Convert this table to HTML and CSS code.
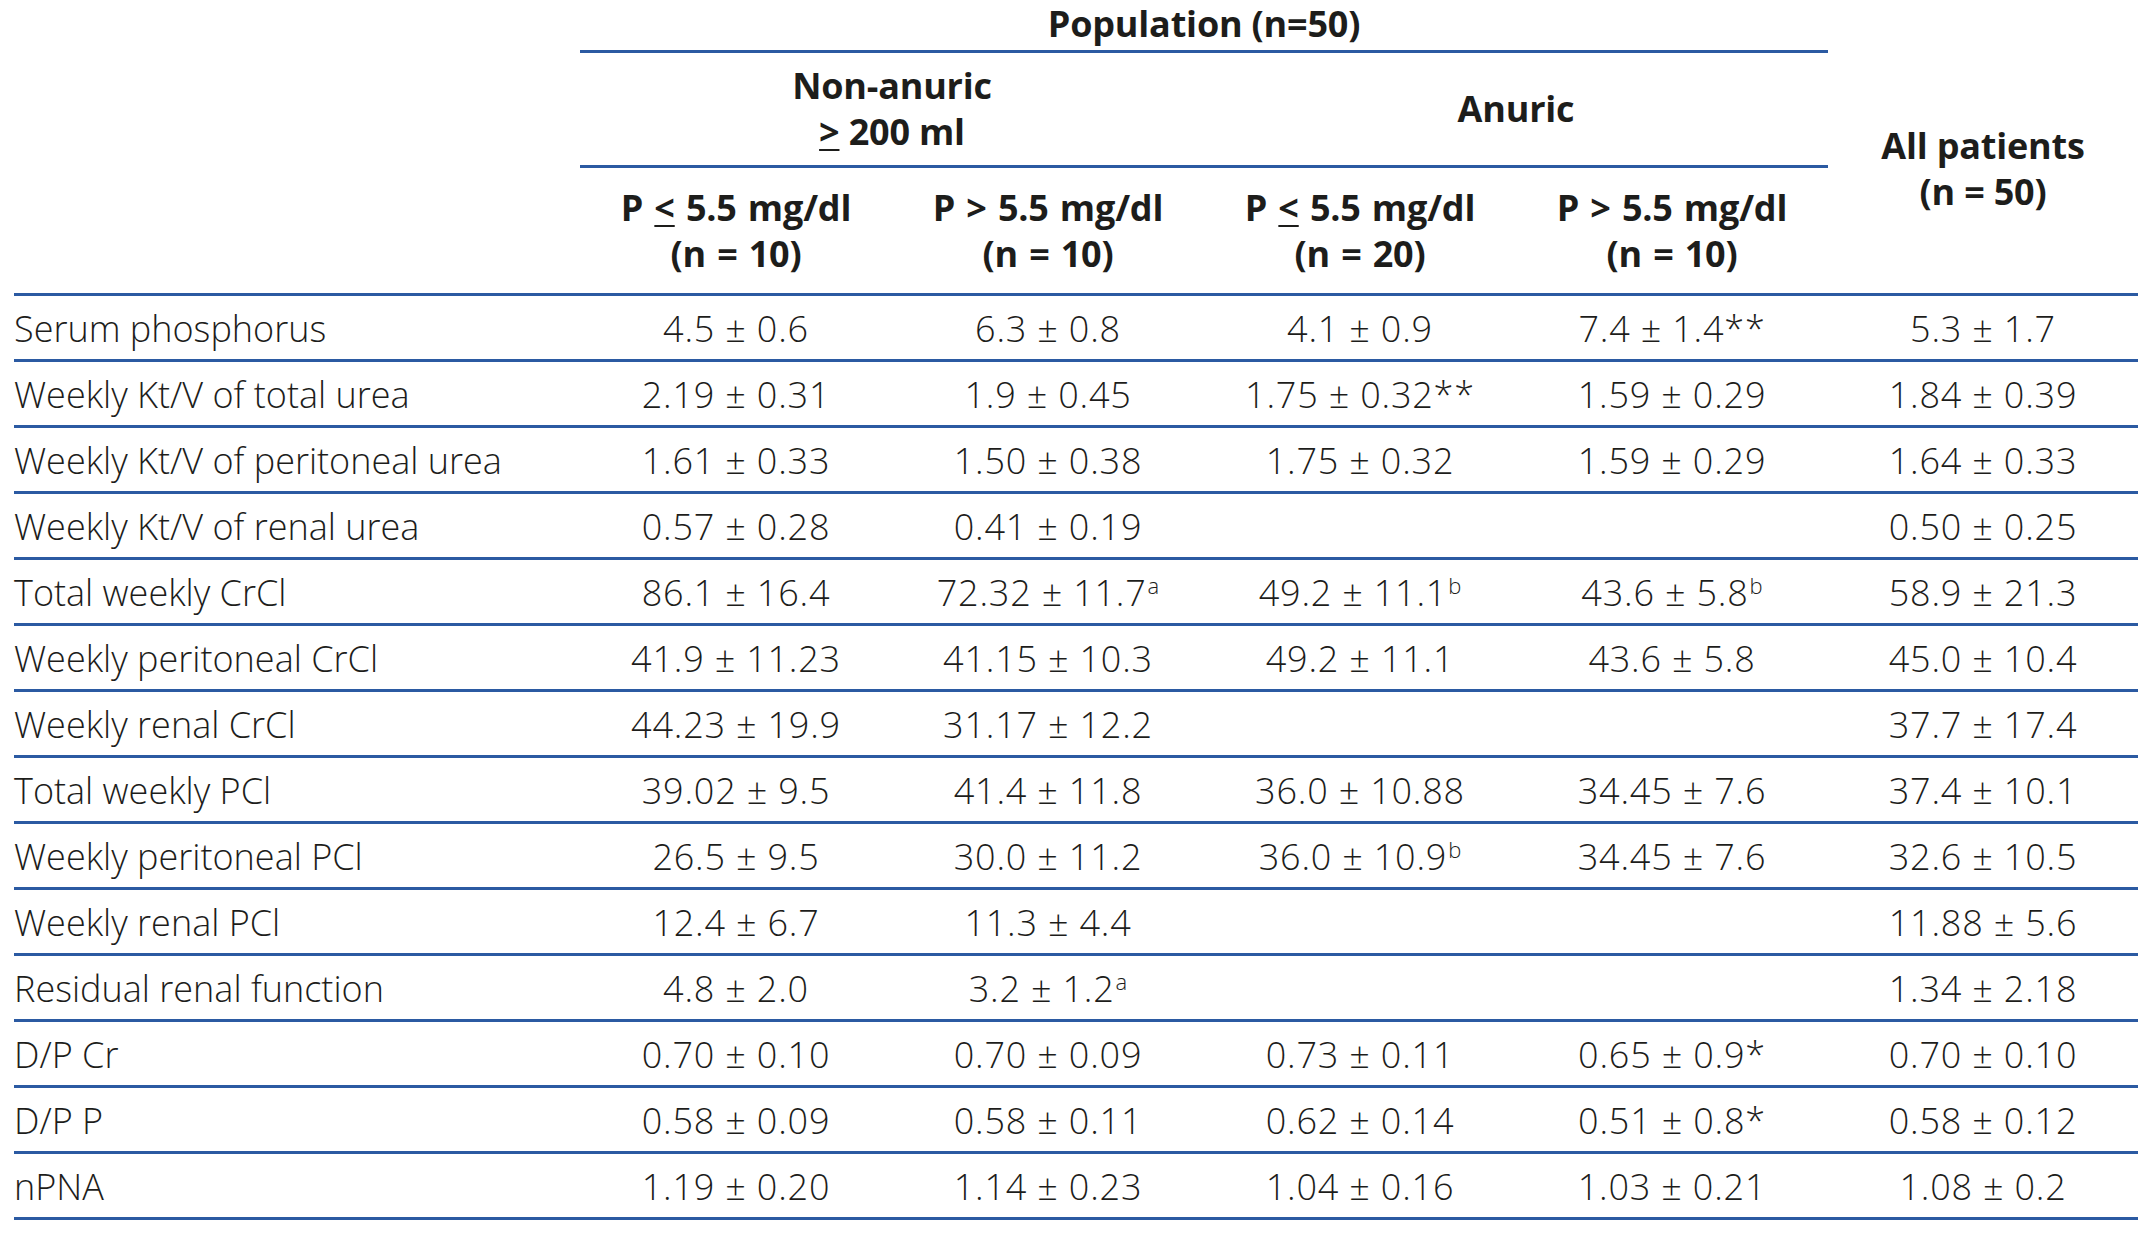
FILE: index.html
```html
<!DOCTYPE html>
<html lang="en">
<head>
<meta charset="utf-8">
<title>Population table</title>
<link rel="stylesheet" href="styles.css">
</head>
<body>
<div class="table">
  <div class="thead">
    <div class="cell corner"></div>
    <div class="cell head pop"><span>Population (n=50)</span></div>
    <div class="cell head all"><span>All patients<br>(n = 50)</span></div>

    <div class="cell head g1"><span>Non-anuric<br><span class="ul">&gt;</span> 200 ml</span></div>
    <div class="cell head g2"><span>Anuric</span></div>

    <div class="cell head sub c1"><span>P <span class="ul">&lt;</span> 5.5 mg/dl<br>(n = 10)</span></div>
    <div class="cell head sub c2"><span>P &gt; 5.5 mg/dl<br>(n = 10)</span></div>
    <div class="cell head sub c3"><span>P <span class="ul">&lt;</span> 5.5 mg/dl<br>(n = 20)</span></div>
    <div class="cell head sub c4"><span>P &gt; 5.5 mg/dl<br>(n = 10)</span></div>
  </div>

  <div class="tbody">
    <div class="cell label">Serum phosphorus</div>
    <div class="cell val">4.5 ± 0.6</div>
    <div class="cell val">6.3 ± 0.8</div>
    <div class="cell val">4.1 ± 0.9</div>
    <div class="cell val">7.4 ± 1.4**</div>
    <div class="cell val">5.3 ± 1.7</div>

    <div class="cell label">Weekly Kt/V of total urea</div>
    <div class="cell val">2.19 ± 0.31</div>
    <div class="cell val">1.9 ± 0.45</div>
    <div class="cell val">1.75 ± 0.32**</div>
    <div class="cell val">1.59 ± 0.29</div>
    <div class="cell val">1.84 ± 0.39</div>

    <div class="cell label">Weekly Kt/V of peritoneal urea</div>
    <div class="cell val">1.61 ± 0.33</div>
    <div class="cell val">1.50 ± 0.38</div>
    <div class="cell val">1.75 ± 0.32</div>
    <div class="cell val">1.59 ± 0.29</div>
    <div class="cell val">1.64 ± 0.33</div>

    <div class="cell label">Weekly Kt/V of renal urea</div>
    <div class="cell val">0.57 ± 0.28</div>
    <div class="cell val">0.41 ± 0.19</div>
    <div class="cell val"></div>
    <div class="cell val"></div>
    <div class="cell val">0.50 ± 0.25</div>

    <div class="cell label">Total weekly CrCl</div>
    <div class="cell val">86.1 ± 16.4</div>
    <div class="cell val"><span>72.32 ± 11.7<sup>a</sup></span></div>
    <div class="cell val"><span>49.2 ± 11.1<sup>b</sup></span></div>
    <div class="cell val"><span>43.6 ± 5.8<sup>b</sup></span></div>
    <div class="cell val">58.9 ± 21.3</div>

    <div class="cell label">Weekly peritoneal CrCl</div>
    <div class="cell val">41.9 ± 11.23</div>
    <div class="cell val">41.15 ± 10.3</div>
    <div class="cell val">49.2 ± 11.1</div>
    <div class="cell val">43.6 ± 5.8</div>
    <div class="cell val">45.0 ± 10.4</div>

    <div class="cell label">Weekly renal CrCl</div>
    <div class="cell val">44.23 ± 19.9</div>
    <div class="cell val">31.17 ± 12.2</div>
    <div class="cell val"></div>
    <div class="cell val"></div>
    <div class="cell val">37.7 ± 17.4</div>

    <div class="cell label">Total weekly PCl</div>
    <div class="cell val">39.02 ± 9.5</div>
    <div class="cell val">41.4 ± 11.8</div>
    <div class="cell val">36.0 ± 10.88</div>
    <div class="cell val">34.45 ± 7.6</div>
    <div class="cell val">37.4 ± 10.1</div>

    <div class="cell label">Weekly peritoneal PCl</div>
    <div class="cell val">26.5 ± 9.5</div>
    <div class="cell val">30.0 ± 11.2</div>
    <div class="cell val"><span>36.0 ± 10.9<sup>b</sup></span></div>
    <div class="cell val">34.45 ± 7.6</div>
    <div class="cell val">32.6 ± 10.5</div>

    <div class="cell label">Weekly renal PCl</div>
    <div class="cell val">12.4 ± 6.7</div>
    <div class="cell val">11.3 ± 4.4</div>
    <div class="cell val"></div>
    <div class="cell val"></div>
    <div class="cell val">11.88 ± 5.6</div>

    <div class="cell label">Residual renal function</div>
    <div class="cell val">4.8 ± 2.0</div>
    <div class="cell val"><span>3.2 ± 1.2<sup>a</sup></span></div>
    <div class="cell val"></div>
    <div class="cell val"></div>
    <div class="cell val">1.34 ± 2.18</div>

    <div class="cell label">D/P Cr</div>
    <div class="cell val">0.70 ± 0.10</div>
    <div class="cell val">0.70 ± 0.09</div>
    <div class="cell val">0.73 ± 0.11</div>
    <div class="cell val">0.65 ± 0.9*</div>
    <div class="cell val">0.70 ± 0.10</div>

    <div class="cell label">D/P P</div>
    <div class="cell val">0.58 ± 0.09</div>
    <div class="cell val">0.58 ± 0.11</div>
    <div class="cell val">0.62 ± 0.14</div>
    <div class="cell val">0.51 ± 0.8*</div>
    <div class="cell val">0.58 ± 0.12</div>

    <div class="cell label">nPNA</div>
    <div class="cell val">1.19 ± 0.20</div>
    <div class="cell val">1.14 ± 0.23</div>
    <div class="cell val">1.04 ± 0.16</div>
    <div class="cell val">1.03 ± 0.21</div>
    <div class="cell val">1.08 ± 0.2</div>
  </div>
</div>
</body>
</html>
```
FILE: styles.css
```css
html, body {
  margin: 0;
  padding: 0;
  background: #ffffff;
}

body {
  font-family: "Open Sans", "Noto Sans", "Liberation Sans", sans-serif;
  color: #1d1d1b;
  padding-left: 14px;
}

.table {
  width: 2124px;
}

.thead,
.tbody {
  display: grid;
  grid-template-columns: 566px 312px 312px 312px 312px 310px;
}

.thead {
  grid-template-rows: 53px 115px 128px;
}

.tbody {
  grid-auto-rows: 66px;
}

.cell {
  box-sizing: border-box;
  border-bottom: 3px solid #2b5aa2;
  display: flex;
  align-items: center;
  font-size: 36px;
  line-height: 46px;
  font-weight: 300;
  white-space: nowrap;
}

.head {
  font-weight: 700;
  justify-content: center;
  text-align: center;
  letter-spacing: -0.2px;
}

.corner {
  grid-column: 1;
  grid-row: 1 / 4;
}

.pop {
  grid-column: 2 / 6;
  grid-row: 1;
  padding-bottom: 2px;
}

.all {
  grid-column: 6;
  grid-row: 2 / 4;
  padding-bottom: 8px;
}

.g1 {
  grid-column: 2 / 4;
  grid-row: 2;
}

.g2 {
  grid-column: 4 / 6;
  grid-row: 2;
}

.sub {
  grid-row: 3;
  word-spacing: 2px;
}

.c1 { grid-column: 2; }
.c2 { grid-column: 3; }
.c3 { grid-column: 4; }
.c4 { grid-column: 5; }

.ul {
  text-decoration: underline;
  text-decoration-thickness: 2px;
  text-underline-offset: 4px;
}

.label {
  justify-content: flex-start;
  padding-top: 2px;
}

.val {
  justify-content: center;
  letter-spacing: 0.8px;
  padding-top: 2px;
}

sup {
  font-size: 22px;
  line-height: 0;
  vertical-align: 0;
  position: relative;
  top: -12px;
  margin-left: 1px;
  letter-spacing: 0;
}
```
